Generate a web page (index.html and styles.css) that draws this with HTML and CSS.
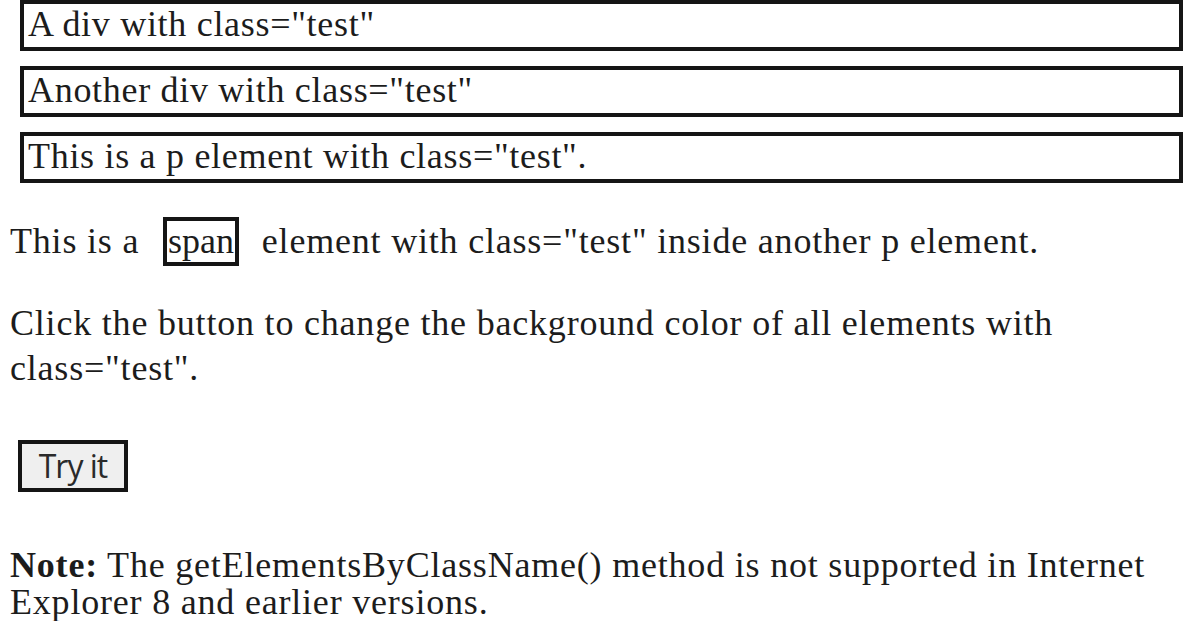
FILE: index.html
```html
<!DOCTYPE html>
<html>
<head>
    <title>getElementsByClassName</title>
    <link rel="stylesheet" href="styles.css">
</head>
<body>

<div class="test">A div with class="test"</div>
<div class="test">Another div with class="test"</div>
<p class="test">This is a p element with class="test".</p>

<p class="inline">This is a <span class="test">span</span> element with class="test" inside another p element.</p>

<p class="click">Click the button to change the background color of all elements with class="test".</p>

<button class="try">Try it</button>

<p class="note"><b>Note:</b> The getElementsByClassName() method is not supported in Internet Explorer 8 and earlier versions.</p>

</body>
</html>
```

FILE: styles.css
```css
BODY {
    margin: 0;
    padding: 0 10px 0 10px;
    font-family: "Liberation Serif", "Times New Roman", serif;
    font-size: 36px;
    letter-spacing: 0.8px;
    color: #1c1c1c;
    background: #fff;
}

.test {
    border: 4px solid #151515;
}

DIV.test, P.test {
    margin: 0 3px 15px 10px;
    height: 43px;
    line-height: 40px;
    padding: 0 4px;
    letter-spacing: 0.7px;
}

SPAN.test {
    display: inline-block;
    margin: 0 13px 0 14px;
    padding: 0 1px;
    line-height: 41px;
    letter-spacing: 0;
}

P.inline {
    margin: 34px 0 0 0;
    line-height: 49px;
}

P.click {
    margin: 35px 0 0 0;
    line-height: 45px;
}

.try {
    margin: 49px 0 0 8px;
    width: 110px;
    height: 52px;
    border: 4px solid #151515;
    background: #efefef;
    font-family: "Open Sans", "Noto Sans", sans-serif;
    font-size: 32px;
    letter-spacing: -1px;
    color: #2a2a2a;
    padding: 0 0 2px 0;
}

P.note {
    margin: 55px 0 0 0;
    line-height: 37px;
}
```
